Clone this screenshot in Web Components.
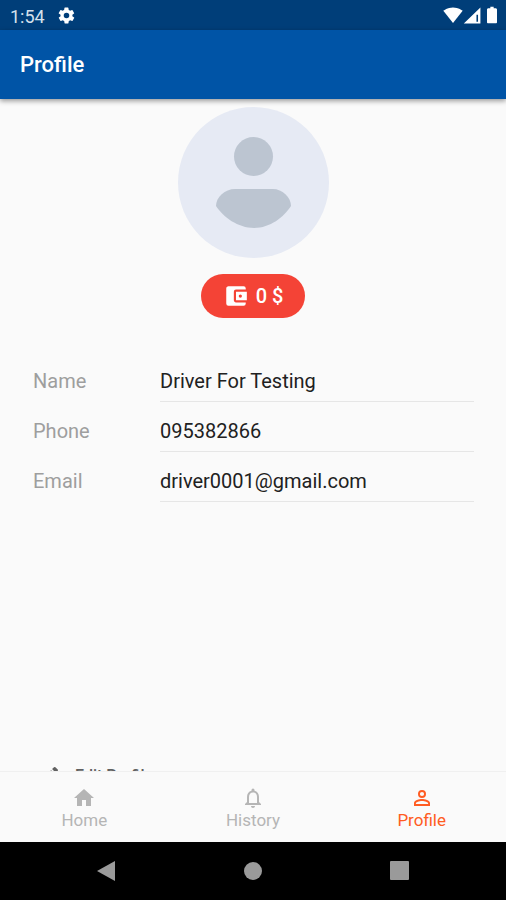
<!DOCTYPE html>
<html lang="en">
<head>
<meta charset="utf-8">
<meta name="viewport" content="width=device-width, initial-scale=1">
<title>Profile</title>
<style>
  body {
    margin: 0;
    background: #fafafa;
    font-family: Roboto, "Liberation Sans", sans-serif;
  }
</style>
</head>
<body>
<profile-screen></profile-screen>

<script>
// Icon paths, all on a 24 x 24 grid
const ICONS = {
  settings: '<path d="M19.4 13a7.5 7.5 0 0 0 0-2l2.1-1.6a.5.5 0 0 0 .1-.7l-2-3.4a.5.5 0 0 0-.6-.2l-2.5 1a7.3 7.3 0 0 0-1.7-1l-.4-2.6a.5.5 0 0 0-.5-.5h-4a.5.5 0 0 0-.5.5L9 5.1a7.7 7.7 0 0 0-1.7 1l-2.5-1a.5.5 0 0 0-.6.2l-2 3.4a.5.5 0 0 0 .1.7L4.5 11a7.5 7.5 0 0 0 0 2l-2.1 1.6a.5.5 0 0 0-.1.7l2 3.4c.1.2.4.3.6.2l2.5-1a7.3 7.3 0 0 0 1.7 1l.4 2.6c0 .3.2.5.5.5h4c.3 0 .5-.2.5-.5l.4-2.6a7.7 7.7 0 0 0 1.7-1l2.5 1c.2.1.5 0 .6-.2l2-3.4a.5.5 0 0 0-.1-.7zM12 15.5a3.5 3.5 0 1 1 0-7 3.5 3.5 0 0 1 0 7z"/>',
  wifi: '<path d="M12 21.5 23.6 7C23.2 6.6 18.7 3 12 3S.8 6.600.4 7z"/>',
  signal: '<path fill-rule="evenodd" d="M1 22h21V2zM17 11h2v9h-2z"/>',
  battery: '<path d="M15.7 4H14V2h-4v2H8.3C7.1 4 6 4.6 6 5.3v15.3c0 .8.6 1.4 1.3 1.4h9.3c.8 0 1.4-.6 1.4-1.3V5.3c0-.7-1.1-1.3-2.3-1.3z"/>',
  wallet: '<path d="M21 18v1a2 2 0 0 1-2 2H5a2 2 0 0 1-2-2V5c0-1.1.9-2 2-2h14a2 2 0 0 1 2 2v1h-9a2 2 0 0 0-2 2v8c0 1.1.9 2 2 2h9zm-9-2h10V8H12v8zm4-2.5a1.5 1.5 0 1 1 0-3 1.5 1.5 0 0 1 0 3z"/>',
  edit: '<path d="M3 17.25V21h3.75L17.8 9.9l-3.7-3.7L3 17.25zM20.7 7c.4-.4.4-1 0-1.4l-2.3-2.3a1 1 0 0 0-1.4 0l-1.9 1.8 3.8 3.8L20.7 7z"/>',
  home: '<path d="M10 20v-6h4v6h5v-8h3L12 3 2 12h3v8z"/>',
  bell: '<path d="M12 22c1.1 0 2-.9 2-2h-4c0 1.1.9 2 2 2zm6-6v-5c0-3.1-1.6-5.6-4.5-6.3V4a1.5 1.5 0 0 0-3 0v.7C7.6 5.4 6 7.900 6 11v5l-2 2v1h16v-1l-2-2zm-2 1H8v-6c0-2.5 1.5-4.5 4-4.5s4 2 4 4.5v6z"/>',
  person: '<path d="M12 5.9a2.1 2.1 0 1 1 0 4.2 2.1 2.1 0 0 1 0-4.2m0 9c3 0 6.1 1.5 6.1 2.1v1.1H5.900V17c0-.6 3.1-2.1 6.1-2.1M12 4a4 4 0 1 0 0 8 4 4 0 0 0 0-8zm0 9c-2.7 0-8 1.300-8 4v3h16v-3c0-2.7-5.3-4-8-4z"/>',
  back: '<path d="M20 2v20L2 12z"/>',
  circle: '<circle cx="12" cy="12" r="9"/>',
  square: '<rect x="3" y="2" width="19" height="19" rx="1"/>'
};

// <ui-icon name="home" size="24"></ui-icon>
class UiIcon extends HTMLElement {
  constructor() {
    super();
    this.attachShadow({ mode: "open" });
  }

  connectedCallback() {
    const size = this.getAttribute("size") || "24";
    this.shadowRoot.innerHTML = `
      <style>
        :host { display: block; width: ${size}px; height: ${size}px; flex: none; }
        svg { display: block; width: 100%; height: 100%; fill: currentColor; }
      </style>
      <svg viewBox="0 0 24 24" aria-hidden="true">${ICONS[this.getAttribute("name")]}</svg>
    `;
  }
}

class StatusBar extends HTMLElement {
  constructor() {
    super();
    this.attachShadow({ mode: "open" });
  }

  connectedCallback() {
    this.shadowRoot.innerHTML = `
      <style>
        :host {
          display: flex;
          align-items: center;
          height: 30px;
          padding: 0 4px 0 10px;
          box-sizing: border-box;
          background: #003e79;
          color: #fff;
          font-size: 18px;
        }
        time { margin-right: 12px; padding-top: 2px; color: #d5e0ec; }
        .right { display: flex; align-items: center; margin-left: auto; }
      </style>
      <time>1:54</time>
      <ui-icon name="settings" size="19"></ui-icon>
      <div class="right">
        <ui-icon name="wifi" size="20"></ui-icon>
        <ui-icon name="signal" size="19"></ui-icon>
        <ui-icon name="battery" size="20"></ui-icon>
      </div>
    `;
  }
}

class AppBar extends HTMLElement {
  constructor() {
    super();
    this.attachShadow({ mode: "open" });
  }

  connectedCallback() {
    this.shadowRoot.innerHTML = `
      <style>
        :host {
          display: flex;
          align-items: center;
          height: 69px;
          padding: 0 20px;
          background: #0054a6;
          color: #fff;
          position: relative;
          z-index: 1;
          box-shadow: 0 2px 5px rgba(0, 0, 0, 0.4);
        }
        h1 { margin: 0; font-size: 22px; line-height: 28px; font-weight: 500; }
      </style>
      <h1><slot></slot></h1>
    `;
  }
}

class UserAvatar extends HTMLElement {
  constructor() {
    super();
    this.attachShadow({ mode: "open" });
  }

  connectedCallback() {
    this.shadowRoot.innerHTML = `
      <style>
        :host { display: block; width: 151px; height: 151px; }
        svg { display: block; width: 100%; height: 100%; }
      </style>
      <svg viewBox="0 0 151 151" role="img" aria-label="Avatar">
        <circle cx="75.5" cy="75.5" r="75.5" fill="#e6eaf4"/>
        <circle cx="75.5" cy="49.5" r="19.5" fill="#bcc5d1"/>
        <path fill="#bcc5d1" d="M57 82h38c9 0 18 8 18 17-7 11-21 22-37 22s-31-11-38-22c0-9 9-17 19-17z"/>
      </svg>
    `;
  }
}

class BalanceButton extends HTMLElement {
  constructor() {
    super();
    this.attachShadow({ mode: "open" });
  }

  connectedCallback() {
    this.shadowRoot.innerHTML = `
      <style>
        :host { display: block; }
        button {
          display: flex;
          align-items: center;
          gap: 7px;
          height: 44px;
          padding: 0 22px;
          border: 0;
          border-radius: 22px;
          background: #f44336;
          color: #fff;
          font: 500 20px Roboto, "Liberation Sans", sans-serif;
        }
      </style>
      <button type="button"><ui-icon name="wallet" size="26"></ui-icon><slot></slot></button>
    `;
  }
}

// <profile-field label="Name" value="..."></profile-field>
class ProfileField extends HTMLElement {
  constructor() {
    super();
    this.attachShadow({ mode: "open" });
  }

  connectedCallback() {
    const type = this.getAttribute("type") || "text";
    this.shadowRoot.innerHTML = `
      <style>
        :host { display: flex; font-size: 20px; }
        label { width: 127px; flex: none; line-height: 42px; color: #9e9e9e; }
        input {
          flex: 1;
          min-width: 0;
          height: 42px;
          box-sizing: border-box;
          padding: 0;
          border: 0;
          border-bottom: 1px solid #e6e6e6;
          border-radius: 0;
          outline: 0;
          background: none;
          color: #212121;
          font: inherit;
        }
      </style>
      <label for="field">${this.getAttribute("label")}</label>
      <input id="field" type="${type}" value="${this.getAttribute("value")}" readonly>
    `;
  }
}

class NavTab extends HTMLElement {
  constructor() {
    super();
    this.attachShadow({ mode: "open" });
  }

  connectedCallback() {
    this.shadowRoot.innerHTML = `
      <style>
        :host { display: block; flex: 1; color: #b5b5b5; }
        :host([active]) { color: #ff5c22; }
        a {
          display: flex;
          flex-direction: column;
          align-items: center;
          color: inherit;
          font-size: 17px;
          line-height: 20px;
          text-decoration: none;
        }
      </style>
      <a href="#"><ui-icon name="${this.getAttribute("icon")}" size="24"></ui-icon><slot></slot></a>
    `;
  }
}

class BottomNav extends HTMLElement {
  constructor() {
    super();
    this.attachShadow({ mode: "open" });
  }

  connectedCallback() {
    this.shadowRoot.innerHTML = `
      <style>
        :host { display: block; background: #fafafa; border-top: 1px solid #f0f0f0; }
        nav { display: flex; padding: 14px 0 12px; }
      </style>
      <nav><slot></slot></nav>
    `;
  }
}

class SystemNav extends HTMLElement {
  constructor() {
    super();
    this.attachShadow({ mode: "open" });
  }

  connectedCallback() {
    this.shadowRoot.innerHTML = `
      <style>
        :host {
          display: flex;
          justify-content: center;
          gap: 122px;
          height: 58px;
          background: #000;
        }
        button {
          display: flex;
          align-items: center;
          padding: 0;
          border: 0;
          background: none;
          color: #9a9a9a;
        }
      </style>
      <button type="button" aria-label="Back"><ui-icon name="back" size="24"></ui-icon></button>
      <button type="button" aria-label="Home"><ui-icon name="circle" size="24"></ui-icon></button>
      <button type="button" aria-label="Recent"><ui-icon name="square" size="24"></ui-icon></button>
    `;
  }
}

class ProfileScreen extends HTMLElement {
  constructor() {
    super();
    this.attachShadow({ mode: "open" });
  }

  connectedCallback() {
    this.shadowRoot.innerHTML = `
      <style>
        :host { display: flex; flex-direction: column; height: 100vh; }
        main {
          flex: 1;
          min-height: 0;
          overflow: hidden;
          display: flex;
          flex-direction: column;
          padding-top: 8px;
        }
        .head { display: flex; flex-direction: column; align-items: center; gap: 16px; }
        form {
          display: flex;
          flex-direction: column;
          gap: 8px;
          margin-top: 42px;
          padding: 0 32px 0 33px;
        }
        /* last action sits at the fold, partly under the bottom navigation */
        .edit {
          display: flex;
          align-items: center;
          gap: 14px;
          flex: none;
          margin: auto 0 -17px 37px;
          align-self: flex-start;
          padding: 0;
          border: 0;
          background: none;
          color: #616161;
          font: 500 16px/20px Roboto, "Liberation Sans", sans-serif;
        }
      </style>
      <status-bar></status-bar>
      <app-bar>Profile</app-bar>
      <main>
        <div class="head">
          <user-avatar></user-avatar>
          <balance-button>0 $</balance-button>
        </div>
        <form>
          <profile-field label="Name" value="Driver For Testing"></profile-field>
          <profile-field label="Phone" type="tel" value="095382866"></profile-field>
          <profile-field label="Email" type="email" value="driver0001@gmail.com"></profile-field>
        </form>
        <button class="edit" type="button"><ui-icon name="edit" size="24"></ui-icon>Edit Profile</button>
      </main>
      <bottom-nav>
        <nav-tab icon="home">Home</nav-tab>
        <nav-tab icon="bell">History</nav-tab>
        <nav-tab icon="person" active>Profile</nav-tab>
      </bottom-nav>
      <system-nav></system-nav>
    `;
  }
}

customElements.define("ui-icon", UiIcon);
customElements.define("status-bar", StatusBar);
customElements.define("app-bar", AppBar);
customElements.define("user-avatar", UserAvatar);
customElements.define("balance-button", BalanceButton);
customElements.define("profile-field", ProfileField);
customElements.define("nav-tab", NavTab);
customElements.define("bottom-nav", BottomNav);
customElements.define("system-nav", SystemNav);
customElements.define("profile-screen", ProfileScreen);
</script>
</body>
</html>
